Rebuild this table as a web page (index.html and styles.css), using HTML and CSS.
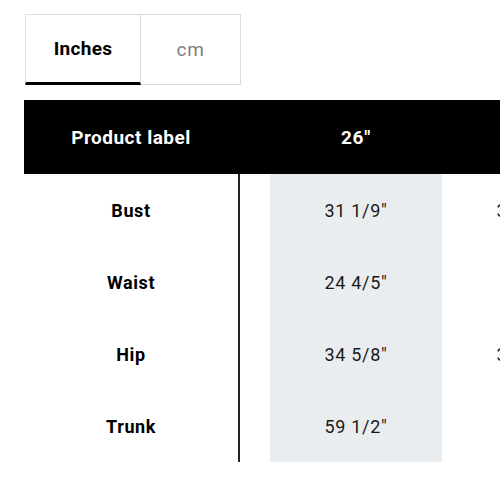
FILE: index.html
```html
<!DOCTYPE html>
<html lang="en">
<head>
<meta charset="utf-8">
<title>Size chart</title>
<link rel="stylesheet" href="styles.css">
</head>
<body>
<div class="page">
  <div class="tabs">
    <button class="tab tab-active">Inches</button>
    <button class="tab tab-cm">cm</button>
  </div>
  <div class="chart">
    <div class="row head">
      <div class="label">Product label</div>
      <div class="cells">
        <div class="cell">26"</div>
        <div class="cell">27"</div>
        <div class="cell">28"</div>
      </div>
    </div>
    <div class="row">
      <div class="label">Bust</div>
      <div class="cells">
        <div class="cell hl">31 1/9"</div>
        <div class="cell">32 1/4"</div>
        <div class="cell">33 1/2"</div>
      </div>
    </div>
    <div class="row">
      <div class="label">Waist</div>
      <div class="cells">
        <div class="cell hl">24 4/5"</div>
        <div class="cell">26"</div>
        <div class="cell">27"</div>
      </div>
    </div>
    <div class="row">
      <div class="label">Hip</div>
      <div class="cells">
        <div class="cell hl">34 5/8"</div>
        <div class="cell">35 3/4"</div>
        <div class="cell">37"</div>
      </div>
    </div>
    <div class="row">
      <div class="label">Trunk</div>
      <div class="cells">
        <div class="cell hl">59 1/2"</div>
        <div class="cell">61"</div>
        <div class="cell">62"</div>
      </div>
    </div>
  </div>
  <p class="note">Some of the sizes shown may not be available.</p>
</div>
</body>
</html>
```
FILE: styles.css
```css
html, body {
  margin: 0;
  padding: 0;
  background: #fff;
}
body {
  font-family: Roboto, "Liberation Sans", sans-serif;
  color: #000;
  overflow: hidden;
  width: 500px;
  height: 485px;
}
.page {
  padding: 14px 0 0 24px;
}
.tabs {
  display: flex;
  margin-left: 1px;
}
.tab {
  font-family: inherit;
  font-size: 19px;
  height: 71px;
  background: #fff;
  border: 1px solid #dcdcdc;
  padding: 0;
  margin: 0;
  cursor: pointer;
}
.tab-active {
  width: 116px;
  font-weight: 700;
  color: #000;
  border-bottom: 3px solid #000;
  letter-spacing: 0.3px;
}
.tab-cm {
  width: 100px;
  border-left: none;
  color: #808080;
  font-weight: 400;
  letter-spacing: 0.8px;
}
.chart {
  margin-top: 15px;
  width: 476px;
  overflow: hidden;
}
.row {
  display: flex;
  height: 72px;
  width: 800px;
}
.row.head {
  height: 74px;
  background: #000;
  color: #fff;
}
.label {
  width: 214px;
  flex: none;
  display: flex;
  align-items: center;
  justify-content: center;
  font-weight: 700;
  font-size: 18px;
  letter-spacing: 0.6px;
  border-right: 2px solid #222;
}
.row.head .label {
  border-right-color: #000;
  font-size: 19px;
  letter-spacing: 0.5px;
}
.cells {
  display: flex;
  padding-left: 30px;
}
.cell {
  width: 172px;
  flex: none;
  display: flex;
  align-items: center;
  justify-content: center;
  font-size: 18px;
  letter-spacing: 0.7px;
  color: #1a1a1a;
}
.row.head .cell {
  font-weight: 700;
  font-size: 19px;
  color: #fff;
}
.cell.hl {
  background: #eaedf0;
}
.note {
  margin: 19px 0 0 2px;
  font-size: 14px;
  line-height: 20px;
  color: #a0a0a0;
}
```
